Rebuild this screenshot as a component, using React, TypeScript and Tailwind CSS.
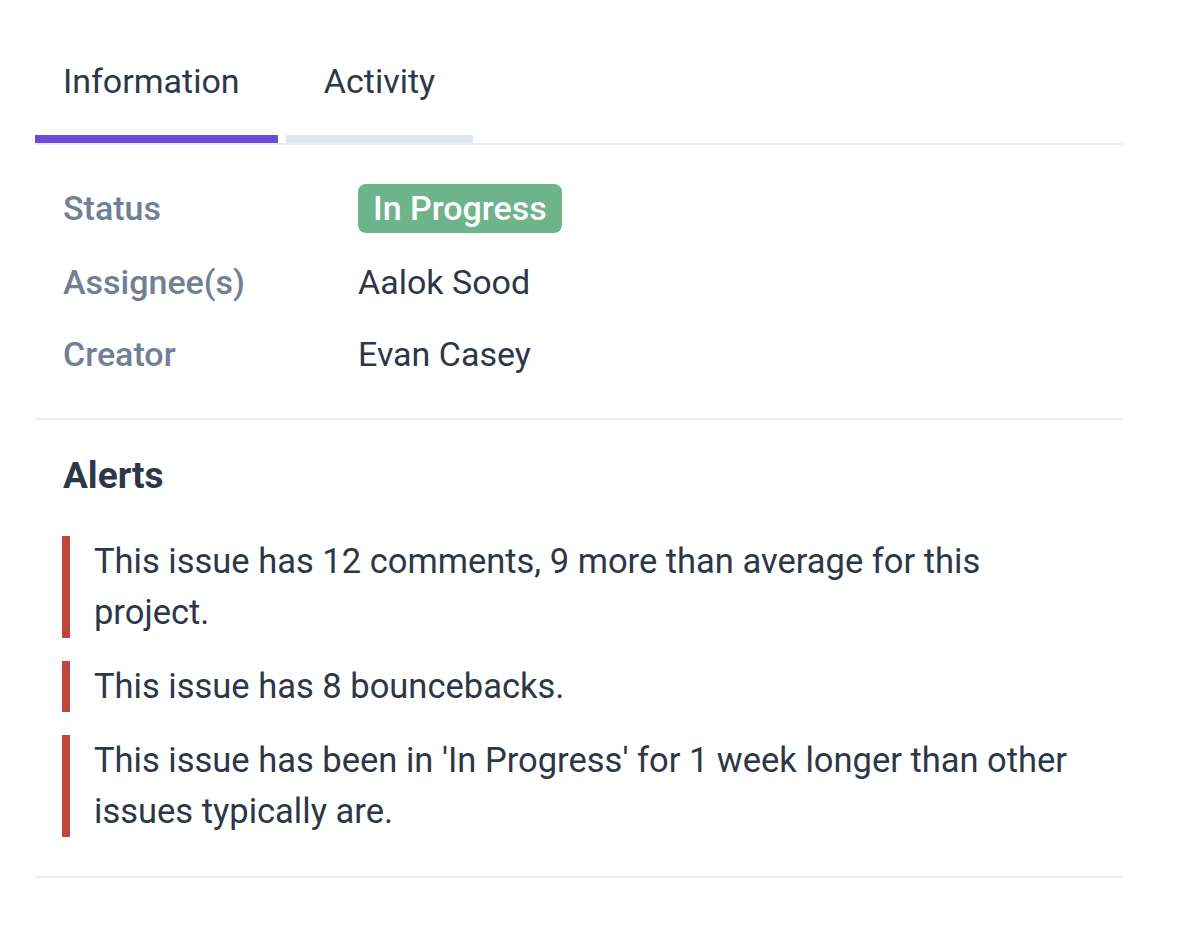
import React, { useState } from 'react';

type Tab = 'information' | 'activity';

const alerts = [
  'This issue has 12 comments, 9 more than average for this project.',
  'This issue has 8 bouncebacks.',
  "This issue has been in 'In Progress' for 1 week longer than other issues typically are.",
];

const InfoRow = ({ label, children }: { label: string; children: React.ReactNode }) => (
  <div className="flex items-center min-h-[51px]">
    <div className="w-[295px] shrink-0 font-medium text-[#718096]">{label}</div>
    <div className="text-[#2d3748]">{children}</div>
  </div>
);

export default function App() {
  const [tab, setTab] = useState<Tab>('information');

  return (
    <div
      className="min-h-screen bg-white pl-[35px] text-[34px] leading-[1.5]"
      style={{ fontFamily: 'Roboto, "Liberation Sans", sans-serif' }}
    >
      <div className="w-[1088px]">
        <div className="flex gap-2 border-b-2 border-[#e8ebf1]">
          <button
            className={`pt-[56px] pb-[28px] pl-[28px] pr-[38px] w-[243px] text-left text-[34px] leading-[1.5] text-[#2d3748] border-b-8 ${
              tab === 'information' ? 'border-[#6c4bdb]' : 'border-[#e2e6ee]'
            }`}
            onClick={() => setTab('information')}
          >
            Information
          </button>
          <button
            className={`pt-[56px] pb-[28px] w-[187px] text-center text-[34px] leading-[1.5] text-[#2d3748] border-b-8 ${
              tab === 'activity' ? 'border-[#6c4bdb]' : 'border-[#e2e6ee]'
            }`}
            onClick={() => setTab('activity')}
          >
            Activity
          </button>
        </div>

        <div className="flex flex-col gap-[21px] px-[28px] pt-[35px] pb-[38px] border-b-2 border-[#e8ebf1]">
          <div className="flex items-center min-h-[56px]">
            <div className="w-[295px] shrink-0 font-medium text-[#718096]">Status</div>
            <span className="inline-flex items-center h-[49px] px-[15px] rounded-[8px] bg-[#6db48b] text-white font-medium leading-none">
              In Progress
            </span>
          </div>
          <InfoRow label="Assignee(s)">Aalok Sood</InfoRow>
          <InfoRow label="Creator">Evan Casey</InfoRow>
        </div>

        <div className="px-[28px] pt-[34px] pb-[39px] border-b-2 border-[#e8ebf1]">
          <h2 className="text-[37px] leading-[1.2] font-bold text-[#2d3748] mb-[38px]">Alerts</h2>
          <div className="flex flex-col gap-[23px]">
            {alerts.map(text => (
              <div
                key={text}
                className="max-w-[1017px] border-l-8 border-[#c0453a] pl-[24px] -ml-px text-[34.5px] leading-[51px] text-[#2d3748]"
              >
                {text}
              </div>
            ))}
          </div>
        </div>
      </div>
    </div>
  );
}
